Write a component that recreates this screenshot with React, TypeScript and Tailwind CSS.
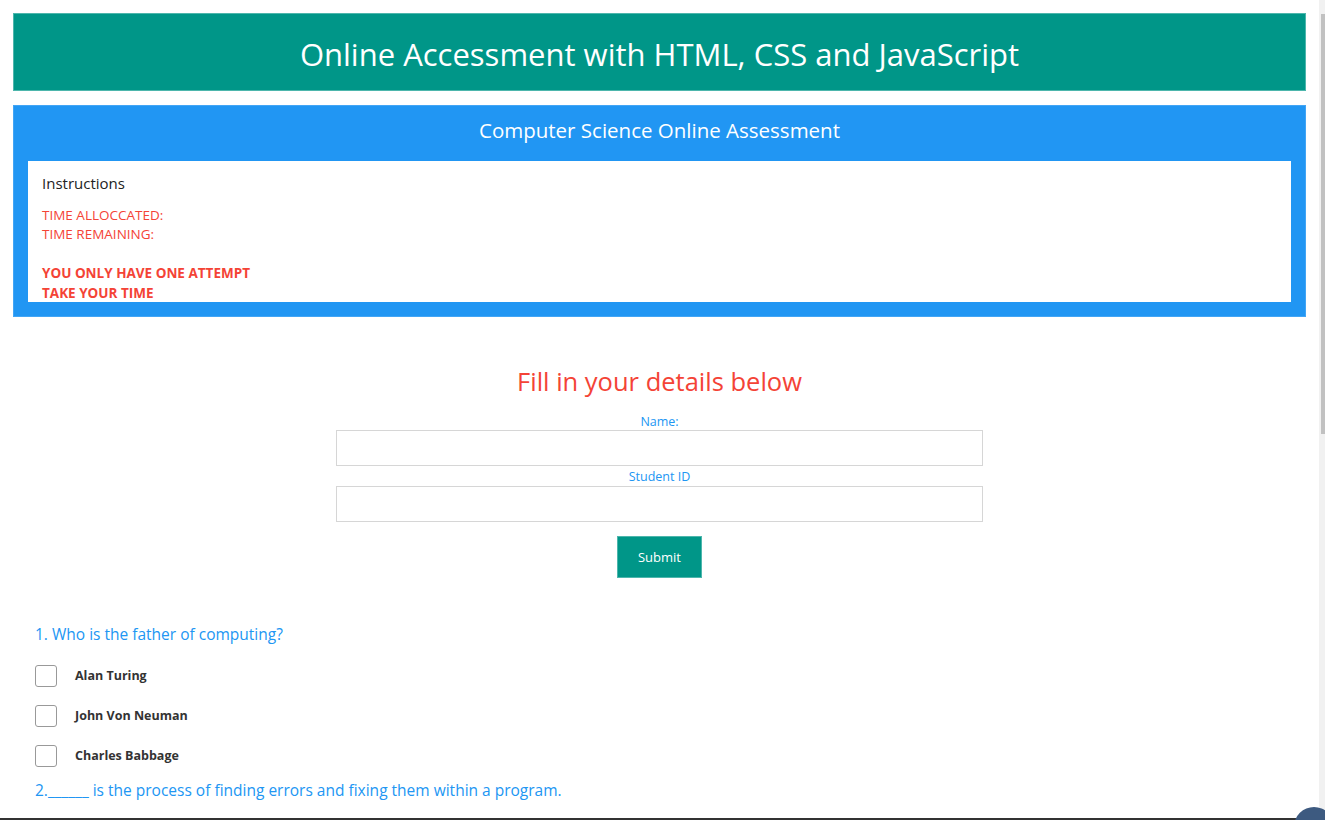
import { useState } from 'react';

const options = ['Alan Turing', 'John Von Neuman', 'Charles Babbage'];

function App() {
  const [picked, setPicked] = useState<string[]>([]);

  const toggle = (name: string) => {
    setPicked((p) => (p.includes(name) ? p.filter((x) => x !== name) : [...p, name]));
  };

  return (
    <div className="flex h-[820px] overflow-hidden bg-white font-['Open_Sans',sans-serif]">
      {/* page */}
      <div className="flex-1 relative">
        <div className="px-[13px] pt-[13px]">
          {/* header */}
          <div className="bg-[#009688] border border-[#4db6ac] h-[78px] flex items-center justify-center pt-[4px]">
            <h1 className="text-white text-[31px] leading-none">Online Accessment with HTML, CSS and JavaScript</h1>
          </div>

          {/* assessment box */}
          <div className="mt-[14px] bg-[#2196f3] border border-[#42a5f5] px-[14px] pb-[14px]">
            <h2 className="text-white text-[20.5px] h-[55px] flex items-center justify-center pb-[6px]">
              Computer Science Online Assessment
            </h2>
            <div className="bg-white h-[141px] px-[14px] pt-[11px] overflow-hidden">
              <p className="text-[#222] text-[15px]">Instructions</p>
              <div className="mt-[11px] text-[#f44336] text-[13.5px] leading-[19.5px]">
                <p>TIME ALLOCCATED:</p>
                <p>TIME REMAINING:</p>
                <p>&nbsp;</p>
                <p className="font-bold">YOU ONLY HAVE ONE ATTEMPT</p>
                <p className="font-bold">TAKE YOUR TIME</p>
              </div>
            </div>
          </div>
        </div>

        {/* details form */}
        <div className="mt-[46px] flex flex-col items-center">
          <h3 className="text-[#f44336] text-[25.5px] leading-[36px]">Fill in your details below</h3>
          <label className="mt-[15px] text-[#2196f3] text-[12.5px] leading-[16px]">Name:</label>
          <input className="w-[647px] h-[36px] border border-[#d6d6d6] outline-none px-2" />
          <label className="mt-[2px] text-[#2196f3] text-[12.5px] leading-[18px]">Student ID</label>
          <input className="w-[647px] h-[36px] border border-[#d6d6d6] outline-none px-2" />
          <button className="mt-[14px] w-[85px] h-[42px] bg-[#009688] border border-[#4db6ac] text-white text-[13px] pt-[2px]">
            Submit
          </button>
        </div>

        {/* questions */}
        <div className="px-[35px] mt-[43px]">
          <p className="text-[#2196f3] text-[15.5px] leading-[26px]">1. Who is the father of computing?</p>
          <div className="mt-[18px] flex flex-col gap-[18px]">
            {options.map((o) => (
              <label key={o} className="flex items-center h-[22px] cursor-pointer" onClick={() => toggle(o)}>
                <span className="w-[22px] h-[22px] border border-[#999] rounded-[3px] bg-white flex items-center justify-center text-[13px] text-[#333]">
                  {picked.includes(o) ? '✓' : ''}
                </span>
                <span className="ml-[18px] text-[#333] text-[12.5px] font-bold">{o}</span>
              </label>
            ))}
          </div>
          <p className="mt-[10px] text-[#2196f3] text-[15.5px] leading-[26px]">
            2.______ is the process of finding errors and fixing them within a program.
          </p>
        </div>

        {/* bottom edge and floating button */}
        <div className="absolute left-0 right-0 top-[818px] h-[2px] bg-[#333]"></div>
        <div className="absolute left-[1294px] top-[807px] w-[40px] h-[40px] rounded-full bg-[#3d5a80]"></div>
      </div>

      {/* scrollbar */}
      <div className="w-[6px] bg-[#f1f1f1] pt-[14px] flex justify-end">
        <div className="w-[4px] h-[420px] bg-[#c1c1c1]"></div>
      </div>
    </div>
  );
}

export default App;
